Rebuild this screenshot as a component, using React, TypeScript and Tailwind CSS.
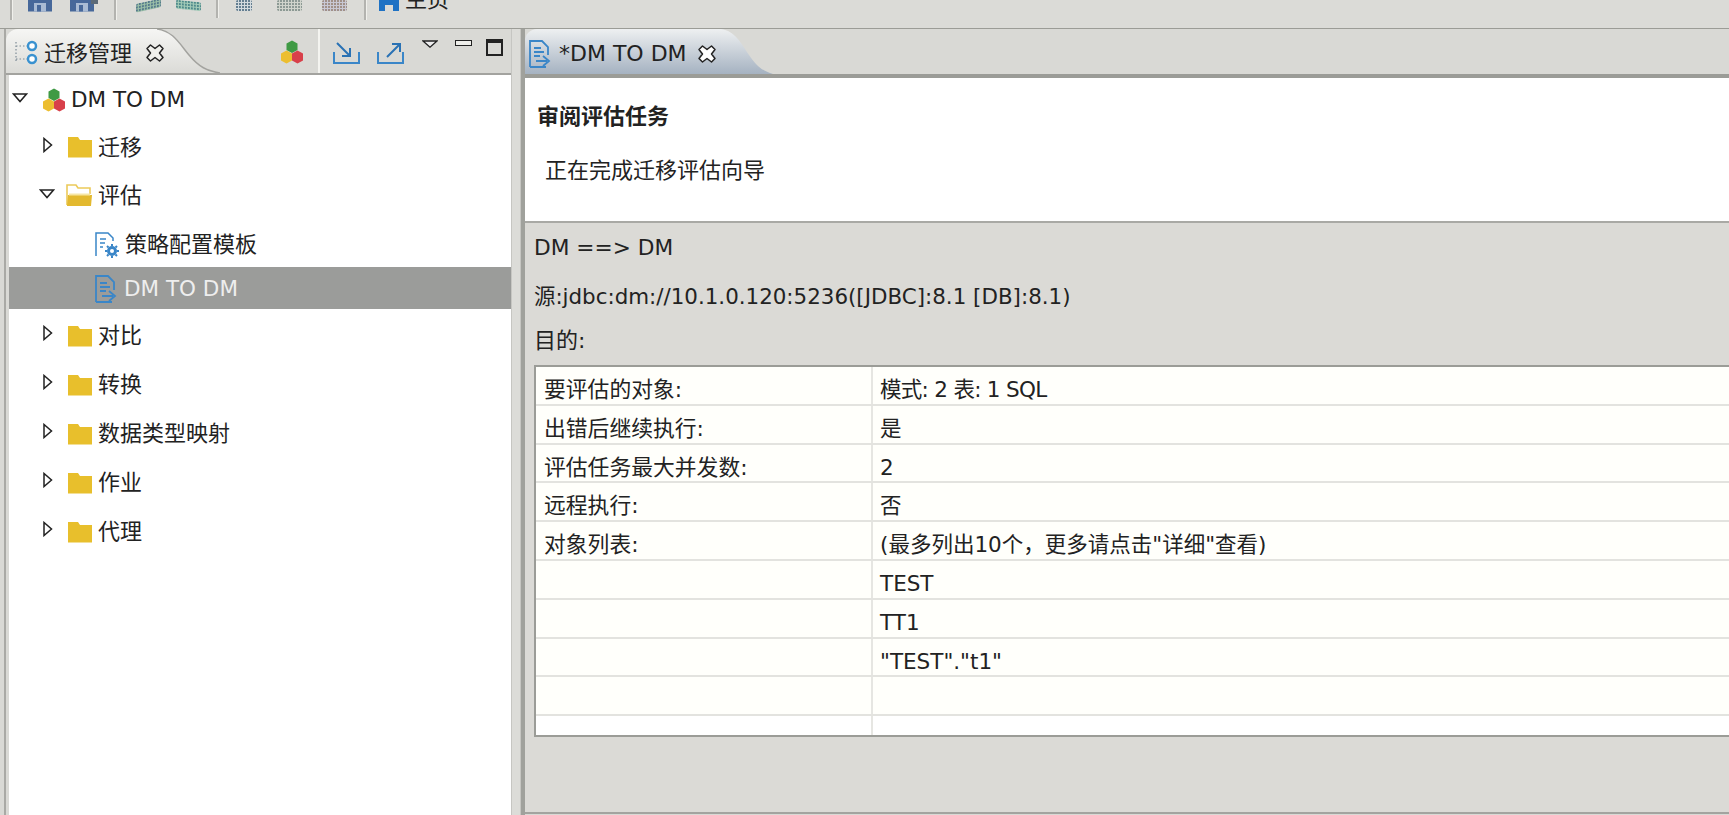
import React from "react";

function Hex({ s = 24 }: { s?: number }) {
  return (
    <svg width={s} height={s} viewBox="0 0 24 24" className="shrink-0">
      <path d="M12 0.500l5.500 3v6.500l-5.500 3-5.500-3V3.500z" fill="#3f9a44" />
      <path d="M6.500 10.500l5.500 3v7l-5.500 3-5.500-3v-7z" fill="#ecbe30" />
      <path d="M17.500 10.500l5.500 3v7l-5.500 3-5.500-3v-7z" fill="#d8404a" />
    </svg>
  );
}
function Folder({ open = false }: { open?: boolean }) {
  return open ? (
    <svg width="27" height="23" viewBox="0 0 27 23" className="shrink-0">
      <path d="M1 21V1h9l2 3h12v6" fill="none" stroke="#ecca5a" strokeWidth="1.600" />
      <path d="M1 22l1-11h24l-1 11z" fill="#e3b92f" />
      <path d="M3 9.500h21v2H3z" fill="#f6e6a6" />
    </svg>
  ) : (
    <svg width="26" height="22" viewBox="0 0 26 22" className="shrink-0">
      <path d="M1 21.500V1h10l2 3h12v17.500z" fill="#e8bf2c" />
    </svg>
  );
}
function TriDown() {
  return (
    <svg width="16" height="10" viewBox="0 0 16 10" className="shrink-0 mb-[4px]">
      <path d="M1.500 1h13L8 8.500z" fill="#fff" stroke="#222" strokeWidth="1.500" />
    </svg>
  );
}
function TriRight() {
  return (
    <svg width="10" height="16" viewBox="0 0 10 16" className="shrink-0 mb-[5px]">
      <path d="M1 1.500v13L8.500 8z" fill="#fff" stroke="#222" strokeWidth="1.500" />
    </svg>
  );
}
function DocIcon({ c = "#3a86c8" }: { c?: string }) {
  return (
    <svg width="25" height="30" viewBox="0 0 25 30" fill="none" stroke={c} strokeWidth="1.800" className="shrink-0">
      <path d="M2 28V2h12l6 6v8" />
      <path d="M2 28h16M6 9h7M6 13h10M6 17h6M8 22h11" />
      <path d="M15 17l6 5-6 5" />
    </svg>
  );
}
function GearDoc() {
  return (
    <svg width="26" height="28" viewBox="0 0 26 28" fill="none" stroke="#3a86c8" strokeWidth="1.500" className="shrink-0">
      <path d="M2 25V2h12l5 5v3M6 8h6M6 12h5M6 16h3" />
      <circle cx="18" cy="20" r="5" fill="#3a86c8" stroke="none" />
      <circle cx="18" cy="20" r="2" fill="#fff" stroke="none" />
      <path d="M18 13v2M18 25v2M11 20h2M23 20h2M13 15l1.500 1.500M21.500 23.500L23 25M13 25l1.500-1.500M21.500 16.500L23 15" strokeWidth="2" />
    </svg>
  );
}
function CloseX({ white = false }: { white?: boolean }) {
  return (
    <svg width="18" height="18" viewBox="0 0 18 18" className="shrink-0">
      <path d="M1 4.500L4.500 1 9 4.500 13.500 1 17 4.500 13.500 9 17 13.500 13.500 17 9 13.500 4.500 17 1 13.500 4.500 9z" fill={white ? "#fff" : "#f0f0ec"} stroke="#222" strokeWidth="1.500" strokeLinejoin="round" />
    </svg>
  );
}
function Dither({ w, h, c1, c2, id }: { w: number; h: number; c1: string; c2: string; id: string }) {
  return (
    <svg width={w} height={h} viewBox={`0 0 ${w} ${h}`} className="shrink-0">
      <defs>
        <pattern id={id} width="3" height="3" patternUnits="userSpaceOnUse">
          <rect width="3" height="3" fill={c2} />
          <rect width="2" height="2" fill={c1} />
        </pattern>
      </defs>
      <rect width={w} height={h} rx="2" fill={`url(#${id})`} />
    </svg>
  );
}
function Save({ extra = false }: { extra?: boolean }) {
  return (
    <svg width={extra ? 28 : 25} height="12" viewBox={extra ? "0 0 28 12" : "0 0 25 12"} className="shrink-0">
      <path d="M0 0h24v11.500H0z" fill="#47689a" />
      <path d="M6 3h12v8.500H6z" fill="#a9bbd4" />
      <path d="M9 5h4v6.500H9z" fill="#47689a" />
      {extra && <path d="M21 0h7v4h-7z" fill="#5c6a78" />}
    </svg>
  );
}

function TreeRow({ h, pl, icon, label, selected, tri }: { h: string; pl: string; icon: React.ReactNode; label: string; selected?: boolean; tri?: React.ReactNode }) {
  const latin = label === "DM TO DM";
  return (
    <div className={`flex items-center shrink-0 ${h} ${pl} ${selected ? "bg-[#9b9c9a] text-[#eeeeee]" : "text-[#222]"}`}>
      {tri}
      {icon}
      <span className={`${latin ? "text-[21.500px]" : "text-[22px]"} whitespace-nowrap ml-[5px]`}>{label}</span>
    </div>
  );
}

const rows = [
  ["要评估的对象:", "模式: 2 表: 1 SQL"],
  ["出错后继续执行:", "是"],
  ["评估任务最大并发数:", "2"],
  ["远程执行:", "否"],
  ["对象列表:", '(最多列出10个，更多请点击"详细"查看)'],
  ["", "TEST"],
  ["", "TT1"],
  ["", '"TEST"."t1"'],
  ["", ""],
];

function Sep({ ml, h = "h-[20px]" }: { ml: string; h?: string }) {
  return <div className={`w-[3px] shrink-0 bg-[#b3b3af] border-r border-[#f0f0ec] ${h} ${ml}`} />;
}

export default function App() {
  return (
    <div
      className="w-[1729px] h-[815px] overflow-hidden bg-[#d9d9d5] flex flex-col text-[#222]"
      style={{ fontFamily: '"DejaVu Sans", "Noto Sans CJK SC", sans-serif' }}
    >
      {/* toolbar, its top cut off by the window */}
      <div className="h-[28px] shrink-0 flex items-start overflow-hidden bg-[#dbdbd7]">
        <Sep ml="ml-[10px]" />
        <div className="ml-[15px]"><Save /></div>
        <div className="ml-[17px]"><Save extra /></div>
        <Sep ml="ml-[16px]" />
        <div className="ml-[19px] mt-[1px] -skew-y-12"><Dither id="a" w={25} h={9} c1="#557a8c" c2="#9cc0a8" /></div>
        <div className="ml-[15px] mt-[1px] skew-y-6"><Dither id="b" w={25} h={9} c1="#4f8a8c" c2="#a4ccb8" /></div>
        <Sep ml="ml-[15px]" h="h-[18px]" />
        <div className="ml-[17px]"><Dither id="c" w={16} h={11} c1="#647e90" c2="#d2dade" /></div>
        <div className="ml-[25px]"><Dither id="d" w={25} h={11} c1="#8c9994" c2="#d0d4cc" /></div>
        <div className="ml-[20px]"><Dither id="e" w={25} h={11} c1="#a09088" c2="#c8c8d4" /></div>
        <Sep ml="ml-[17px]" />
        <svg width="20" height="11" viewBox="0 0 20 11" className="ml-[12px] shrink-0">
          <path d="M0 0h20v11h-6V5H6v6H0z" fill="#1f72c4" />
        </svg>
        <span className="ml-[6px] -mt-[15px] text-[22px] leading-[30px] whitespace-nowrap">主页</span>
      </div>

      <div className="flex-1 min-h-0 flex border-t border-[#9b9c96]">
        {/* left view */}
        <div className="w-[511px] shrink-0 pl-[4px] flex">
          <div className="flex-1 border-l-2 border-[#a9a9a5] flex flex-col min-w-0">
            <div className="h-[44px] shrink-0 flex border-b-2 border-[#a3a39f] box-content">
              <div className="w-[151px] shrink-0 rounded-tl-[12px] bg-linear-to-b from-[#f6f6f4] to-[#dbdbd7] flex items-center pl-[8px] pt-[4px]">
                <svg width="24" height="26" viewBox="0 0 24 26" className="shrink-0" fill="none">
                  <path d="M2 2v20M2 6h14M2 19h14" stroke="#7d8b96" strokeWidth="1.200" strokeDasharray="1.500 2" />
                  <circle cx="18" cy="6" r="4" fill="#fff" stroke="#3a92d0" strokeWidth="2.500" />
                  <circle cx="18" cy="19" r="4" fill="#fff" stroke="#3a92d0" strokeWidth="2.500" />
                </svg>
                <span className="ml-[6px] text-[22px] whitespace-nowrap shrink-0">迁移管理</span>
                <div className="ml-[14px] shrink-0 relative z-10"><CloseX /></div>
              </div>
              <svg width="63" height="44" viewBox="0 0 63 44" className="shrink-0">
                <defs>
                  <linearGradient id="lt" x1="0" y1="0" x2="0" y2="1">
                    <stop offset="0" stopColor="#f6f6f4" />
                    <stop offset="1" stopColor="#dbdbd7" />
                  </linearGradient>
                </defs>
                <path d="M0 0C16 2 22 14 32 26C42 38 50 42 63 44H0z" fill="url(#lt)" />
                <path d="M0 0C16 2 22 14 32 26C42 38 50 42 63 44" fill="none" stroke="#a3a39f" strokeWidth="1.500" />
              </svg>
              <div className="flex-1 flex items-start pt-[11px] min-w-0">
                <div className="ml-[60px]"><Hex /></div>
                <div className="ml-[14px] -mt-[11px] w-[2px] h-[44px] bg-[#f4f4f0] shrink-0" />
                <svg width="27" height="23" viewBox="0 0 27 23" className="ml-[13px] mt-[2px] shrink-0" fill="none" stroke="#3a86c8" strokeWidth="2">
                  <path d="M1 10v11h25V10" />
                  <path d="M4 1l12 12M9 14h8V6" stroke="#2a72b4" />
                </svg>
                <svg width="27" height="23" viewBox="0 0 27 23" className="ml-[17px] mt-[2px] shrink-0" fill="none" stroke="#3a86c8" strokeWidth="2">
                  <path d="M1 10v11h25V10" />
                  <path d="M10 15L23 2M15 2h8v8" stroke="#2a72b4" />
                </svg>
                <svg width="16" height="8" viewBox="0 0 16 8" className="ml-[18px] shrink-0">
                  <path d="M1 1h14L8 7.200z" fill="#eee" stroke="#222" strokeWidth="1.300" />
                </svg>
                <div className="ml-[17px] w-[17px] h-[6px] border border-[#222] bg-[#eeeeea] shrink-0" />
                <div className="ml-[14px] -mt-[1px] w-[17px] h-[17px] border-2 border-[#222] border-t-4 shrink-0" />
              </div>
            </div>
            <div className="flex-1 min-h-0 ml-[3px] bg-white flex flex-col">
              <TreeRow h="h-[49px]" pl="pl-[3px] pt-[1px]" tri={<TriDown />} icon={<div className="ml-[14px]"><Hex /></div>} label="DM TO DM" />
              <TreeRow h="h-[46px]" pl="pl-[34px]" tri={<TriRight />} icon={<div className="ml-[14px]"><Folder /></div>} label="迁移" />
              <TreeRow h="h-[50px]" pl="pl-[30px] pt-[1px]" tri={<TriDown />} icon={<div className="ml-[11px]"><Folder open /></div>} label="评估" />
              <TreeRow h="h-[47px]" pl="pl-[85px] pt-[2px]" icon={<GearDoc />} label="策略配置模板" />
              <TreeRow h="h-[42px]" pl="pl-[85px] pt-[2px]" selected icon={<DocIcon />} label="DM TO DM" />
              <TreeRow h="h-[51px]" pl="pl-[34px] pt-[2px]" tri={<TriRight />} icon={<div className="ml-[14px]"><Folder /></div>} label="对比" />
              <TreeRow h="h-[49px]" pl="pl-[34px]" tri={<TriRight />} icon={<div className="ml-[14px]"><Folder /></div>} label="转换" />
              <TreeRow h="h-[49px]" pl="pl-[34px]" tri={<TriRight />} icon={<div className="ml-[14px]"><Folder /></div>} label="数据类型映射" />
              <TreeRow h="h-[49px]" pl="pl-[34px]" tri={<TriRight />} icon={<div className="ml-[14px]"><Folder /></div>} label="作业" />
              <TreeRow h="h-[49px]" pl="pl-[34px]" tri={<TriRight />} icon={<div className="ml-[14px]"><Folder /></div>} label="代理" />
            </div>
          </div>
        </div>

        {/* sash */}
        <div className="w-[10px] shrink-0 bg-[#dcdcd8] border-x border-[#c6c6c2]" />

        {/* editor */}
        <div className="flex-1 min-w-0 flex flex-col border-l-4 border-[#a0a19c]">
          <div className="h-[45px] shrink-0 flex">
            <div className="w-[196px] shrink-0 rounded-tl-[12px] bg-linear-to-b from-[#eef0f1] to-[#a5b2c1] flex items-center pl-[3px] pt-[4px]">
              <DocIcon />
              <span className="ml-[6px] text-[22px] whitespace-nowrap">*DM TO DM</span>
              <div className="ml-[11px]"><CloseX white /></div>
            </div>
            <svg width="52" height="45" viewBox="0 0 52 45" className="shrink-0">
              <defs>
                <linearGradient id="rt" x1="0" y1="0" x2="0" y2="1">
                  <stop offset="0" stopColor="#eef0f1" />
                  <stop offset="1" stopColor="#a5b2c1" />
                </linearGradient>
              </defs>
              <path d="M0 0C14 2 20 14 28 26C36 38 42 42 52 45H0z" fill="url(#rt)" />
            </svg>
          </div>
          <div className="h-[4px] shrink-0 bg-[#9b9c97]" />
          {/* header */}
          <div className="h-[145px] shrink-0 bg-white border-b-2 border-[#a9a9a5] flex flex-col">
            <div className="ml-[12px] mt-[24px] h-[30px] leading-[30px] text-[22px] font-bold whitespace-nowrap">审阅评估任务</div>
            <div className="ml-[20px] mt-[24px] h-[30px] leading-[30px] text-[22px] whitespace-nowrap">正在完成迁移评估向导</div>
          </div>
          {/* body */}
          <div className="flex-1 min-h-0 flex flex-col bg-[#dbdad6] border-b-2 border-[#a3a39f] mb-[1px] pl-[9px]">
            <div className="mt-[10px] h-[30px] leading-[30px] text-[21.700px] whitespace-nowrap">DM ==&gt; DM</div>
            <div className="mt-[19px] h-[30px] leading-[30px] text-[21.400px] whitespace-nowrap">源:jdbc:dm://10.1.0.120:5236([JDBC]:8.1 [DB]:8.1)</div>
            <div className="mt-[14px] h-[30px] leading-[30px] text-[22px] whitespace-nowrap">目的:</div>
            <div className="mt-[9px] h-[372px] shrink-0 border-t-2 border-l-2 border-b-2 border-[#9b9c97] bg-[#fffffb] flex flex-col">
              {rows.map((r, i) => (
                <div key={i} className="h-[38.800px] shrink-0 flex border-b-2 border-[#e3e3df]">
                  <div className="w-[337px] shrink-0 pl-[8px] pt-[5px] border-r-2 border-[#e6e6e2] text-[21.800px] leading-[36px] whitespace-nowrap">{r[0]}</div>
                  <div className={`flex-1 pl-[7px] pt-[5px] text-[21.500px] leading-[36px] whitespace-nowrap ${i === 0 ? "tracking-[-0.700px]" : ""}`}>{r[1]}</div>
                </div>
              ))}
              <div className="flex-1 flex bg-white">
                <div className="w-[337px] shrink-0 border-r-2 border-[#e6e6e2]" />
              </div>
            </div>
          </div>
        </div>
      </div>
    </div>
  );
}
